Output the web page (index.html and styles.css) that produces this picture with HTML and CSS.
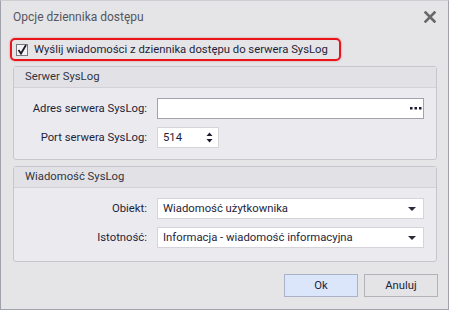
FILE: index.html
```html
<!DOCTYPE html>
<html lang="pl">
<head>
    <meta charset="utf-8">
    <title>Opcje dziennika dostępu</title>
    <link rel="stylesheet" href="styles.css">
</head>
<body>
    <div class="okno">
        <header class="pasek">
            <h1>Opcje dziennika dostępu</h1>
            <svg class="zamknij" width="12" height="12" viewBox="0 0 12 12">
                <path d="M1.5 1.5 L10.5 10.5 M10.5 1.5 L1.5 10.5" stroke="#686868" stroke-width="2.6" stroke-linecap="square"/>
            </svg>
        </header>

        <label class="wyslij">
            <svg class="pole" width="12" height="12" viewBox="0 0 12 12">
                <rect x="0.5" y="0.5" width="11" height="11" fill="#f4f4f6" stroke="#7a7a80"/>
                <path d="M2.5 6 L5 9.5 L10 1" fill="none" stroke="#1c1c2c" stroke-width="1.8"/>
            </svg>
            Wyślij wiadomości z dziennika dostępu do serwera SysLog
        </label>

        <section class="grupa">
            <h2>Serwer SysLog</h2>
            <div class="wiersze">
                <span class="etykieta">Adres serwera SysLog:</span>
                <div class="pole-tekst ciemne">
                    <span></span>
                    <svg width="12" height="3" viewBox="0 0 12 3">
                        <rect x="0" y="0" width="2.5" height="2.5" fill="#1c1c2c"/>
                        <rect x="4.5" y="0" width="2.5" height="2.5" fill="#1c1c2c"/>
                        <rect x="9" y="0" width="2.5" height="2.5" fill="#1c1c2c"/>
                    </svg>
                </div>
                <span class="etykieta">Port serwera SysLog:</span>
                <div class="pole-tekst port">
                    <span>514</span>
                    <svg width="7" height="11" viewBox="0 0 7 11">
                        <path d="M3.5 0.5 L6.5 4 L0.5 4 Z M0.5 7 L6.5 7 L3.5 10.5 Z" fill="#1c1c2c"/>
                    </svg>
                </div>
            </div>
        </section>

        <section class="grupa druga">
            <h2>Wiadomość SysLog</h2>
            <div class="wiersze">
                <span class="etykieta">Obiekt:</span>
                <div class="pole-tekst">
                    <span>Wiadomość użytkownika</span>
                    <svg width="8" height="4" viewBox="0 0 8 4"><path d="M0 0 L8 0 L4 4 Z" fill="#2a2a3a"/></svg>
                </div>
                <span class="etykieta">Istotność:</span>
                <div class="pole-tekst">
                    <span>Informacja - wiadomość informacyjna</span>
                    <svg width="8" height="4" viewBox="0 0 8 4"><path d="M0 0 L8 0 L4 4 Z" fill="#2a2a3a"/></svg>
                </div>
            </div>
        </section>

        <footer class="przyciski">
            <button class="ok">Ok</button>
            <button>Anuluj</button>
        </footer>
    </div>
</body>
</html>
```

FILE: styles.css
```css
* {
    margin: 0;
    box-sizing: border-box;
}

body {
    background-color: #ffffff;
    font-family: Roboto, "Liberation Sans", sans-serif;
    font-size: 11.3px;
    color: #1e1e3a;
}

.okno {
    width: 449px;
    height: 310px;
    background-color: #e5e5e7;
    border: 1px solid #9fa2ab;
    border-top-color: #cfcfd3;
    display: flex;
    flex-direction: column;
}

.pasek {
    height: 37px;
    display: flex;
    align-items: center;
    justify-content: space-between;
    padding: 0 12px 5px 12px;
}

.pasek h1 {
    font-size: 12px;
    font-weight: normal;
    color: #555560;
}

.wyslij {
    align-self: flex-start;
    display: flex;
    align-items: center;
    gap: 6px;
    height: 23px;
    margin-left: 9px;
    padding: 0 11px 0 4px;
    border: 2px solid #e8141c;
    border-radius: 5px;
    box-shadow: 0 0 2px rgba(232, 20, 28, 0.5);
    color: #1e1e3a;
}

.grupa {
    margin: 5px 0 0 12px;
    width: 424px;
    background-color: #ebebef;
    border: 1px solid #c6c6cc;
    border-radius: 3px;
}

.grupa.druga {
    margin-top: 6px;
}

.grupa h2 {
    height: 21px;
    line-height: 20px;
    padding-left: 11px;
    font-size: 11.3px;
    font-weight: normal;
    color: #333340;
    background-color: #e2e2e6;
    border-bottom: 1px solid #d2d2d8;
}

.wiersze {
    display: grid;
    grid-template-columns: 133px 1fr;
    column-gap: 10px;
    row-gap: 8px;
    align-items: center;
    padding: 10px 12px 11px 0;
}

.druga .wiersze {
    padding-bottom: 13px;
}

.etykieta {
    text-align: right;
    color: #1e1e3a;
}

.pole-tekst {
    height: 21px;
    display: flex;
    align-items: center;
    justify-content: space-between;
    padding: 0 7px 0 5px;
    background-color: #ffffff;
    border: 1px solid #d4d4da;
}

.pole-tekst.ciemne {
    border-color: #a2a2ac;
    padding-right: 1px;
}

.pole-tekst.port {
    width: 62px;
    padding-right: 5px;
}

.przyciski {
    display: flex;
    justify-content: flex-end;
    gap: 6px;
    margin-top: 12px;
    padding-right: 10px;
}

button {
    width: 74px;
    height: 23px;
    font-family: Roboto, "Liberation Sans", sans-serif;
    font-size: 11.3px;
    color: #1e1e3a;
    background-color: #e4e4e6;
    border: 1px solid #b2b2b8;
}

button.ok {
    background-color: #dce6fb;
    border-color: #aab2c8;
}
```
